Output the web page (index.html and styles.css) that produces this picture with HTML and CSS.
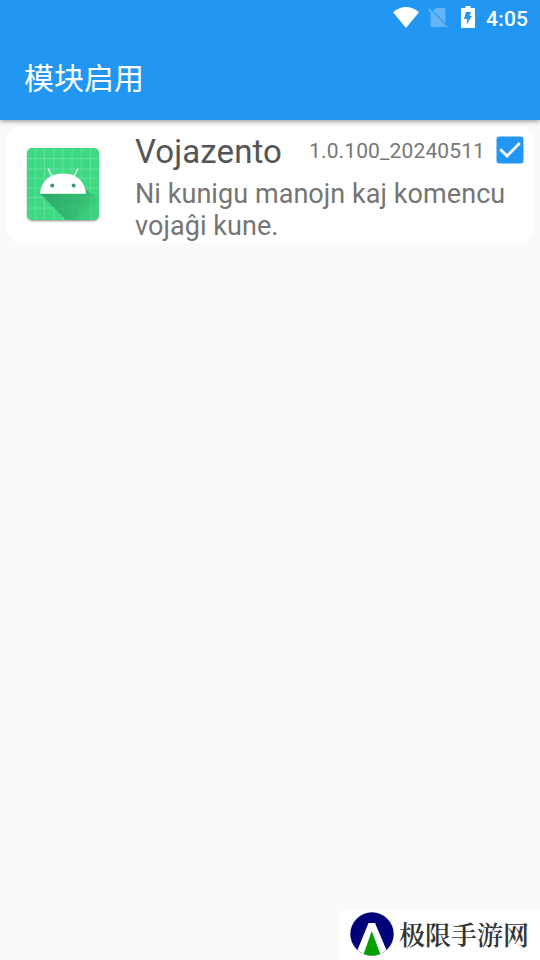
FILE: index.html
```html
<!DOCTYPE html>
<html lang="zh-CN">
<head>
<meta charset="utf-8">
<title>模块启用</title>
<link rel="stylesheet" href="styles.css">
</head>
<body>
<div class="screen">
  <header class="header">
    <div class="status">
      <svg class="wifi" viewBox="0 0 26 21" width="26" height="21"><path d="M0 5.200Q13-5 26 5.200L13 21Z" fill="#fff"/></svg>
      <svg class="sim" viewBox="0 0 20 20" width="20" height="20"><path d="M7.500 0H16Q17.500 0 17.500 1.500V15.500L5 2.800ZM2.500 3L17 18Q16.500 19 16 19H4Q2.500 19 2.500 17.500Z" fill="#fff"/><path d="M.6 1.200L19 19.500" stroke="#fff" stroke-width="1.700"/></svg>
      <svg class="battery" viewBox="0 0 14 22" width="14" height="22"><path d="M4.500 0h5v2H13q1 0 1 1v18q0 1-1 1H1q-1 0-1-1V3q0-1 1-1h3.500z" fill="#fff"/><path d="M5 6h5L8.500 10H11L5.500 18.500L6.200 13H3Z" fill="#2196f3"/></svg>
      <span class="clock">4:05</span>
    </div>
    <h1 class="title">模块启用</h1>
  </header>
  <main class="content">
    <article class="card">
      <svg class="app-icon" viewBox="0 0 74 76" width="74" height="76">
        <defs>
          <clipPath id="tile"><rect x="1" y="1" width="72" height="72" rx="5"/></clipPath>
          <linearGradient id="shade" gradientUnits="userSpaceOnUse" x1="14" y1="40" x2="76" y2="76"><stop offset="0" stop-color="#2b9c62" stop-opacity=".85"/><stop offset=".6" stop-color="#2fae6a" stop-opacity=".7"/><stop offset="1" stop-color="#3ddc84" stop-opacity=".15"/></linearGradient>
        </defs>
        <rect class="tile-shadow" x="1.500" y="2" width="71" height="72" rx="5"/>
        <g clip-path="url(#tile)">
          <rect x="1" y="1" width="72" height="72" fill="#3dd983"/>
          <path d="M9.300 0v74M18.500 0v74M27.700 0v74M36.900 0v74M46.100 0v74M55.300 0v74M64.500 0v74M0 11.500h74M0 22h74M0 31.200h74M0 41h74M0 50.500h74M0 61h74" stroke="#62e29b" stroke-width="1"/>
          <path d="M14 46.500L41 74H74V52L59 42L60 46.500Z" fill="url(#shade)"/>
        </g>
        <path d="M14 46.700C15 34 24 26.500 37 26.500S59 34 60 46.700Z" fill="#fff"/>
        <path d="M25.800 29L22.300 22M48.200 29L51.700 22" stroke="#e9faf1" stroke-width="1.500" stroke-linecap="round"/>
        <circle cx="26.300" cy="38.500" r="2" fill="#349a69"/><circle cx="47.600" cy="38.500" r="2" fill="#349a69"/>
      </svg>
      <div class="details">
        <div class="heading">
          <span class="name">Vojazento</span>
          <span class="version">1.0.100_20240511</span>
          <svg class="check" viewBox="0 0 28 28" width="28" height="28"><rect x=".5" y=".5" width="27" height="27" rx="3" fill="#2196f3"/><path d="M4.300 13.300L11 20L23.800 7" fill="none" stroke="#fff" stroke-width="2.800"/></svg>
        </div>
        <p class="description">Ni kunigu manojn kaj komencu vojaĝi kune.</p>
      </div>
    </article>
  </main>
  <footer class="brand">
    <svg class="brand-mark" viewBox="0 0 44 44" width="44" height="44"><defs><clipPath id="disc"><circle cx="22" cy="22" r="21.700"/></clipPath></defs><g clip-path="url(#disc)"><rect width="44" height="44" fill="#000078"/><path d="M18.500 11h6.500L39 44H5Z" fill="#fff"/><path d="M21.700 19L31 44H13Z" fill="#00a000"/></g></svg>
    <span class="brand-name">极限手游网</span>
  </footer>
</div>
</body>
</html>
```

FILE: styles.css
```css
* { box-sizing: border-box; }
body { margin: 0; background: #fafafa; font-family: Roboto, "Noto Sans CJK SC", sans-serif; }
.screen { height: 960px; display: flex; flex-direction: column; overflow: hidden; }
.header { height: 120px; flex: none; background: #2196f3; color: #fff; box-shadow: 0 1px 5px rgba(0, 0, 0, .45); }
.status { height: 36px; display: flex; justify-content: flex-end; align-items: flex-start; padding: 6px 12px 0 0; }
.wifi { margin: 1px 9px 0 0; }
.sim { margin: 2px 13px 0 0; opacity: .3; }
.battery { margin-right: 11px; }
.clock { font-size: 21px; font-weight: 500; line-height: 26px; letter-spacing: .2px; margin-right: -.2px; }
.title { margin: 0; padding: 21px 24px 0; font-size: 30px; font-weight: 400; line-height: 44px; }
.content { flex: 1; padding: 6px; }
.card { height: 117px; display: flex; background: #fff; border-radius: 16px; }
.app-icon { flex: none; margin: 21px 35px 0 20px; }
.tile-shadow { fill: #888; filter: blur(1px); }
.details { flex: 1; padding-right: 10px; }
.heading { height: 52px; display: flex; align-items: center; }
.name { flex: 1; font-size: 33px; color: #555; line-height: 52px; letter-spacing: .1px; }
.version { font-size: 21px; color: #777; margin: -2px 11px 0 0; letter-spacing: .12px; }
.check { margin-top: -4px; }
.description { margin: 0; font-size: 27px; line-height: 32px; color: #757575; letter-spacing: .06px; }
.brand { width: 200px; height: 50px; flex: none; align-self: flex-end; display: flex; align-items: center; padding-left: 10px; gap: 5px; background: #fff; }
.brand-mark { margin-top: -2px; }
.brand-name { font-family: "Noto Serif CJK SC", "Noto Sans CJK SC", serif; font-size: 26px; font-weight: 600; line-height: 50px; margin-top: -2px; color: #333; white-space: nowrap; }
```
